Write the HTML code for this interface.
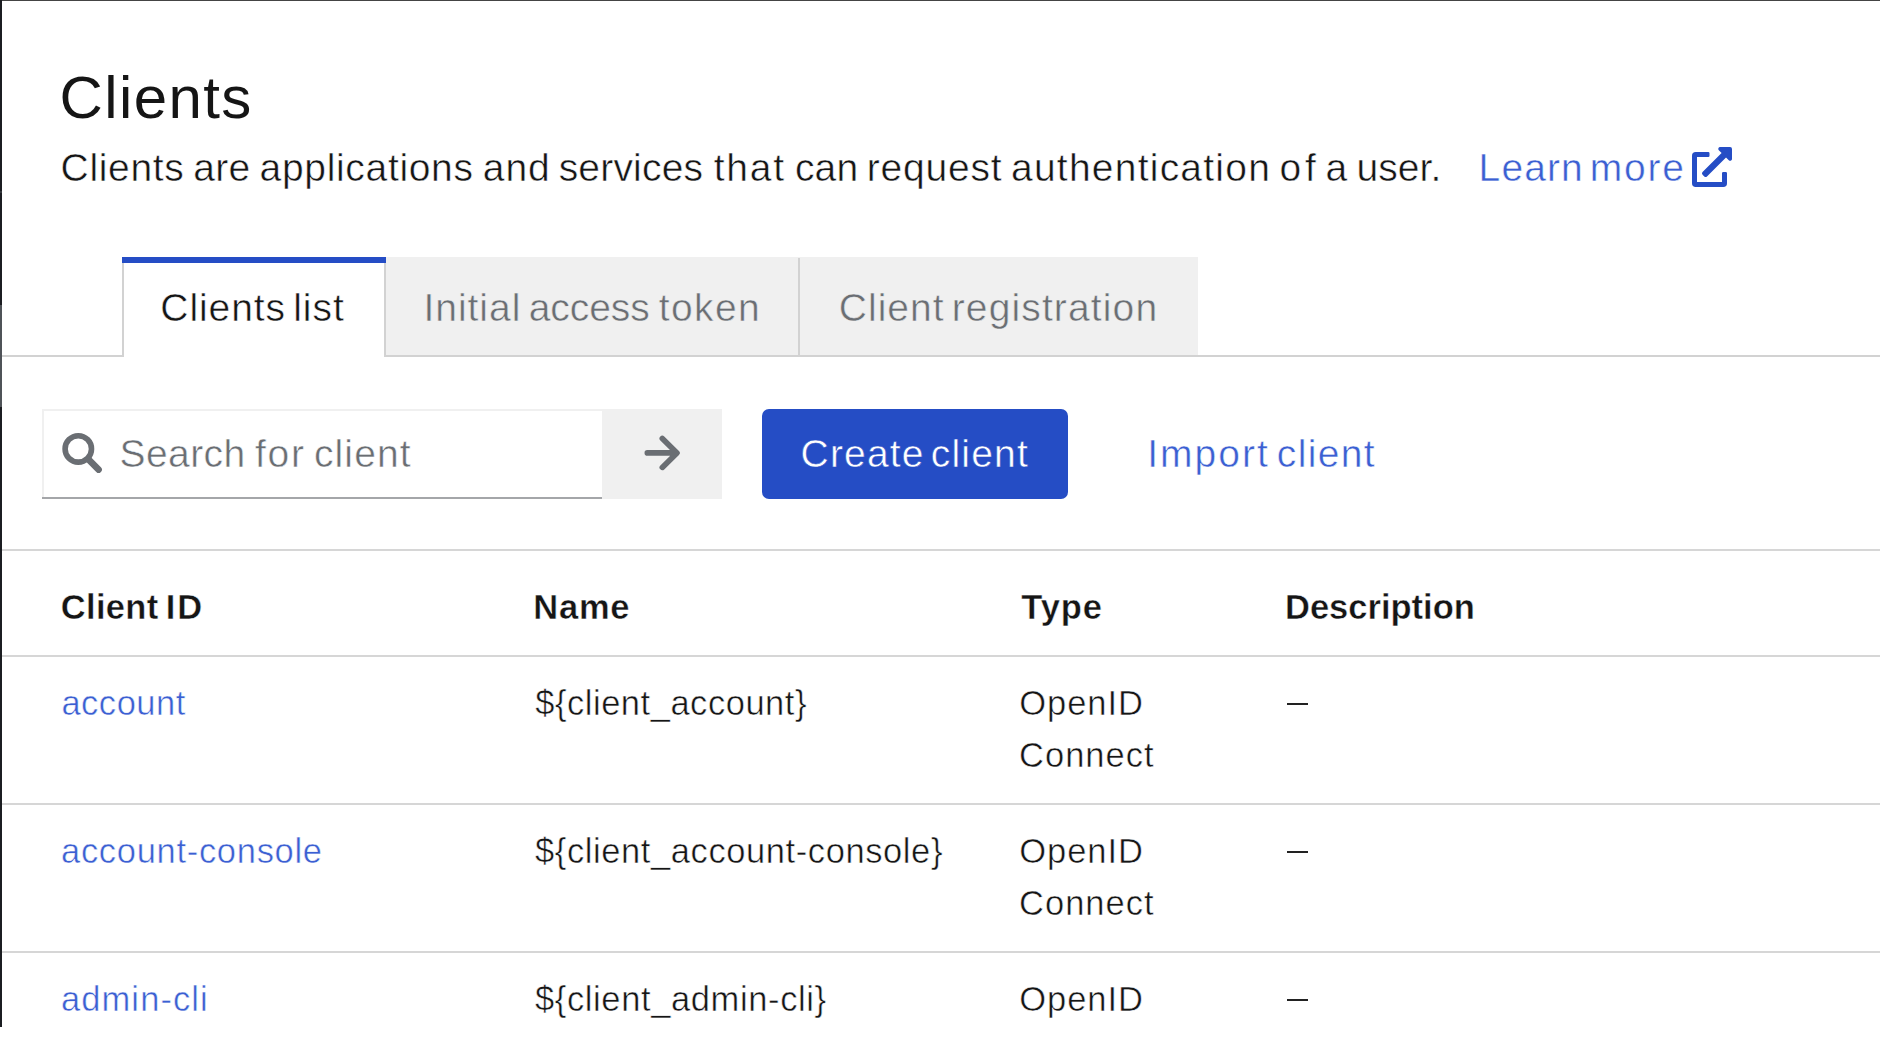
<!DOCTYPE html>
<html><head><meta charset="utf-8"><title>Clients</title>
<style>
html,body{margin:0;padding:0;background:#fff;width:1882px;height:1056px;overflow:hidden;position:relative}
body{font-family:"Liberation Sans",sans-serif}
.r{position:absolute;display:block}
.t{position:absolute;white-space:nowrap}
</style></head><body>
<div class="r" style="left:0px;top:0px;width:1880px;height:1px;background:#444444;"></div><div class="r" style="left:0px;top:0px;width:2px;height:1027px;background:#1b1d21;"></div><div class="r" style="left:0px;top:305px;width:2px;height:102px;background:#4f5358;"></div><div class="r" style="left:0px;top:191px;width:2px;height:2px;background:#34383c;"></div><div class="r" style="left:2px;top:355px;width:1878px;height:2px;background:#d2d2d2;"></div><div class="r" style="left:386px;top:257px;width:812px;height:98px;background:#f0f0f0;"></div><div class="r" style="left:798px;top:258px;width:2px;height:97px;background:#d2d2d2;"></div><div class="r" style="left:122px;top:263px;width:2px;height:94px;background:#d2d2d2;"></div><div class="r" style="left:384px;top:263px;width:2px;height:94px;background:#d2d2d2;"></div><div class="r" style="left:124px;top:263px;width:260px;height:94px;background:#ffffff;"></div><div class="r" style="left:122px;top:257px;width:264px;height:6px;background:#254dc5;"></div><div class="r" style="left:42px;top:409px;width:560px;height:2px;background:#f0f0f0;"></div><div class="r" style="left:42px;top:409px;width:2px;height:88px;background:#f0f0f0;"></div><div class="r" style="left:42px;top:497px;width:560px;height:2px;background:#a4a6a9;"></div><div class="r" style="left:602px;top:409px;width:120px;height:90px;background:#f0f0f0;"></div><div class="r" style="left:762px;top:409px;width:306px;height:90px;background:#254dc5;border-radius:7px;"></div><div class="r" style="left:2px;top:549px;width:1878px;height:2px;background:#d6d6d6;"></div><div class="r" style="left:2px;top:655px;width:1878px;height:2px;background:#d6d6d6;"></div><div class="r" style="left:2px;top:803px;width:1878px;height:2px;background:#d6d6d6;"></div><div class="r" style="left:2px;top:951px;width:1878px;height:2px;background:#d6d6d6;"></div><div class="r" style="left:1287px;top:703px;width:21px;height:2px;background:#222222;"></div><div class="r" style="left:1287px;top:851px;width:21px;height:2px;background:#222222;"></div><div class="r" style="left:1287px;top:999px;width:21px;height:2px;background:#222222;"></div>

<svg class="r" style="left:0;top:0" width="1882" height="1056"><circle cx="78.3" cy="448.9" r="13.2" fill="none" stroke="#6a6e73" stroke-width="5.6"/><path d="M88.2 459.2L98.6 469.6" stroke="#6a6e73" stroke-width="6.6" stroke-linecap="round"/></svg>
<svg class="r" style="left:0;top:0" width="1882" height="1056"><path fill="none" stroke="#6a6e73" stroke-width="5.6" stroke-linecap="round" stroke-linejoin="round" d="M647.3 452.9H676.5M662.3 438.4L677 452.9L662.3 467.4"/></svg>
<svg class="r" style="left:1692px;top:147px" width="40" height="40" viewBox="0 0 512 512"><path fill="#254dc5" d="M432,320H400a16,16,0,0,0-16,16V448H64V128H208a16,16,0,0,0,16-16V80a16,16,0,0,0-16-16H48A48,48,0,0,0,0,112V464a48,48,0,0,0,48,48H400a48,48,0,0,0,48-48V336A16,16,0,0,0,432,320ZM488,0h-128c-21.37,0-32.05,25.91-17,41l35.73,35.73L135,320.37a24,24,0,0,0,0,34L157.67,377a24,24,0,0,0,34,0L435.28,133.32,471,169c15,15,41,4.5,41-17V24A24,24,0,0,0,488,0Z"/></svg>

<div class="t" style="left:59.60px;top:68.30px;font-size:60px;line-height:60px;letter-spacing:1.383px;color:#151515;font-weight:400;-webkit-text-stroke:0.0px #ffffff">Clients</div><div class="t" style="left:60.60px;top:147.90px;font-size:39px;line-height:39px;letter-spacing:0.650px;color:#151515;font-weight:400;-webkit-text-stroke:0.5px #ffffff">Clients</div><div class="t" style="left:193.30px;top:147.90px;font-size:39px;line-height:39px;letter-spacing:0.250px;color:#151515;font-weight:400;-webkit-text-stroke:0.5px #ffffff">are</div><div class="t" style="left:259.60px;top:147.90px;font-size:39px;line-height:39px;letter-spacing:0.673px;color:#151515;font-weight:400;-webkit-text-stroke:0.5px #ffffff">applications</div><div class="t" style="left:482.70px;top:147.90px;font-size:39px;line-height:39px;letter-spacing:1.000px;color:#151515;font-weight:400;-webkit-text-stroke:0.5px #ffffff">and</div><div class="t" style="left:558.70px;top:147.90px;font-size:39px;line-height:39px;letter-spacing:0.186px;color:#151515;font-weight:400;-webkit-text-stroke:0.5px #ffffff">services</div><div class="t" style="left:713.70px;top:147.90px;font-size:39px;line-height:39px;letter-spacing:1.800px;color:#151515;font-weight:400;-webkit-text-stroke:0.5px #ffffff">that</div><div class="t" style="left:794.90px;top:147.90px;font-size:39px;line-height:39px;letter-spacing:0.200px;color:#151515;font-weight:400;-webkit-text-stroke:0.5px #ffffff">can</div><div class="t" style="left:866.70px;top:147.90px;font-size:39px;line-height:39px;letter-spacing:0.800px;color:#151515;font-weight:400;-webkit-text-stroke:0.5px #ffffff">request</div><div class="t" style="left:1011.00px;top:147.90px;font-size:39px;line-height:39px;letter-spacing:1.231px;color:#151515;font-weight:400;-webkit-text-stroke:0.5px #ffffff">authentication</div><div class="t" style="left:1279.50px;top:147.90px;font-size:39px;line-height:39px;letter-spacing:3.900px;color:#151515;font-weight:400;-webkit-text-stroke:0.5px #ffffff">of</div><div class="t" style="left:1325.40px;top:147.90px;font-size:39px;line-height:39px;letter-spacing:0.000px;color:#151515;font-weight:400;-webkit-text-stroke:0.5px #ffffff">a</div><div class="t" style="left:1356.50px;top:147.90px;font-size:39px;line-height:39px;letter-spacing:0.075px;color:#151515;font-weight:400;-webkit-text-stroke:0.5px #ffffff">user.</div><div class="t" style="left:1478.60px;top:148.00px;font-size:39px;line-height:39px;letter-spacing:1.100px;color:#3b5fd2;font-weight:400;-webkit-text-stroke:0.5px #ffffff">Learn</div><div class="t" style="left:1589.80px;top:148.00px;font-size:39px;line-height:39px;letter-spacing:1.733px;color:#3b5fd2;font-weight:400;-webkit-text-stroke:0.5px #ffffff">more</div><div class="t" style="left:160.30px;top:288.30px;font-size:39px;line-height:39px;letter-spacing:0.933px;color:#151515;font-weight:400;-webkit-text-stroke:0.5px #ffffff">Clients</div><div class="t" style="left:293.20px;top:288.30px;font-size:39px;line-height:39px;letter-spacing:1.000px;color:#151515;font-weight:400;-webkit-text-stroke:0.5px #ffffff">list</div><div class="t" style="left:423.40px;top:288.30px;font-size:39px;line-height:39px;letter-spacing:0.983px;color:#6a6e73;font-weight:400;-webkit-text-stroke:0.5px #f0f0f0">Initial</div><div class="t" style="left:528.70px;top:288.30px;font-size:39px;line-height:39px;letter-spacing:-0.060px;color:#6a6e73;font-weight:400;-webkit-text-stroke:0.5px #f0f0f0">access</div><div class="t" style="left:658.80px;top:288.30px;font-size:39px;line-height:39px;letter-spacing:1.400px;color:#6a6e73;font-weight:400;-webkit-text-stroke:0.5px #f0f0f0">token</div><div class="t" style="left:838.80px;top:288.30px;font-size:39px;line-height:39px;letter-spacing:1.000px;color:#6a6e73;font-weight:400;-webkit-text-stroke:0.5px #f0f0f0">Client</div><div class="t" style="left:951.70px;top:288.30px;font-size:39px;line-height:39px;letter-spacing:1.136px;color:#6a6e73;font-weight:400;-webkit-text-stroke:0.5px #f0f0f0">registration</div><div class="t" style="left:119.50px;top:433.50px;font-size:39px;line-height:39px;letter-spacing:0.420px;color:#6a6e73;font-weight:400;-webkit-text-stroke:0.5px #ffffff">Search</div><div class="t" style="left:255.00px;top:433.50px;font-size:39px;line-height:39px;letter-spacing:1.750px;color:#6a6e73;font-weight:400;-webkit-text-stroke:0.5px #ffffff">for</div><div class="t" style="left:313.90px;top:433.50px;font-size:39px;line-height:39px;letter-spacing:1.140px;color:#6a6e73;font-weight:400;-webkit-text-stroke:0.5px #ffffff">client</div><div class="t" style="left:800.60px;top:433.80px;font-size:39px;line-height:39px;letter-spacing:1.180px;color:#ffffff;font-weight:400;-webkit-text-stroke:0.5px #254dc5">Create</div><div class="t" style="left:930.80px;top:433.80px;font-size:39px;line-height:39px;letter-spacing:1.200px;color:#ffffff;font-weight:400;-webkit-text-stroke:0.5px #254dc5">client</div><div class="t" style="left:1147.30px;top:433.80px;font-size:39px;line-height:39px;letter-spacing:1.980px;color:#3b5fd2;font-weight:400;-webkit-text-stroke:0.5px #ffffff">Import</div><div class="t" style="left:1276.80px;top:433.80px;font-size:39px;line-height:39px;letter-spacing:1.340px;color:#3b5fd2;font-weight:400;-webkit-text-stroke:0.5px #ffffff">client</div><div class="t" style="left:60.80px;top:590.10px;font-size:34.5px;line-height:34.5px;letter-spacing:0.300px;color:#151515;font-weight:700;-webkit-text-stroke:0.4px #ffffff">Client</div><div class="t" style="left:165.70px;top:590.10px;font-size:34.5px;line-height:34.5px;letter-spacing:2.100px;color:#151515;font-weight:700;-webkit-text-stroke:0.4px #ffffff">ID</div><div class="t" style="left:533.20px;top:590.10px;font-size:34.5px;line-height:34.5px;letter-spacing:0.800px;color:#151515;font-weight:700;-webkit-text-stroke:0.4px #ffffff">Name</div><div class="t" style="left:1021.30px;top:590.10px;font-size:34.5px;line-height:34.5px;letter-spacing:0.900px;color:#151515;font-weight:700;-webkit-text-stroke:0.4px #ffffff">Type</div><div class="t" style="left:1285.00px;top:590.10px;font-size:34.5px;line-height:34.5px;letter-spacing:0.000px;color:#151515;font-weight:700;-webkit-text-stroke:0.4px #ffffff">Description</div><div class="t" style="left:61.40px;top:685.80px;font-size:34.5px;line-height:34.5px;letter-spacing:0.517px;color:#3b5fd2;font-weight:400;-webkit-text-stroke:0.5px #ffffff">account</div><div class="t" style="left:535.20px;top:685.80px;font-size:34.5px;line-height:34.5px;letter-spacing:0.531px;color:#151515;font-weight:400;-webkit-text-stroke:0.5px #ffffff">${client_account}</div><div class="t" style="left:1019.20px;top:685.80px;font-size:34.5px;line-height:34.5px;letter-spacing:0.960px;color:#151515;font-weight:400;-webkit-text-stroke:0.5px #ffffff">OpenID</div><div class="t" style="left:1019.00px;top:737.50px;font-size:34.5px;line-height:34.5px;letter-spacing:1.017px;color:#151515;font-weight:400;-webkit-text-stroke:0.5px #ffffff">Connect</div><div class="t" style="left:61.00px;top:833.80px;font-size:34.5px;line-height:34.5px;letter-spacing:0.700px;color:#3b5fd2;font-weight:400;-webkit-text-stroke:0.5px #ffffff">account-console</div><div class="t" style="left:535.00px;top:833.80px;font-size:34.5px;line-height:34.5px;letter-spacing:0.592px;color:#151515;font-weight:400;-webkit-text-stroke:0.5px #ffffff">${client_account-console}</div><div class="t" style="left:1019.20px;top:833.80px;font-size:34.5px;line-height:34.5px;letter-spacing:0.960px;color:#151515;font-weight:400;-webkit-text-stroke:0.5px #ffffff">OpenID</div><div class="t" style="left:1019.00px;top:885.50px;font-size:34.5px;line-height:34.5px;letter-spacing:1.017px;color:#151515;font-weight:400;-webkit-text-stroke:0.5px #ffffff">Connect</div><div class="t" style="left:61.00px;top:981.90px;font-size:34.5px;line-height:34.5px;letter-spacing:1.087px;color:#3b5fd2;font-weight:400;-webkit-text-stroke:0.5px #ffffff">admin-cli</div><div class="t" style="left:535.00px;top:981.90px;font-size:34.5px;line-height:34.5px;letter-spacing:0.617px;color:#151515;font-weight:400;-webkit-text-stroke:0.5px #ffffff">${client_admin-cli}</div><div class="t" style="left:1019.20px;top:981.90px;font-size:34.5px;line-height:34.5px;letter-spacing:0.960px;color:#151515;font-weight:400;-webkit-text-stroke:0.5px #ffffff">OpenID</div>
</body></html>
